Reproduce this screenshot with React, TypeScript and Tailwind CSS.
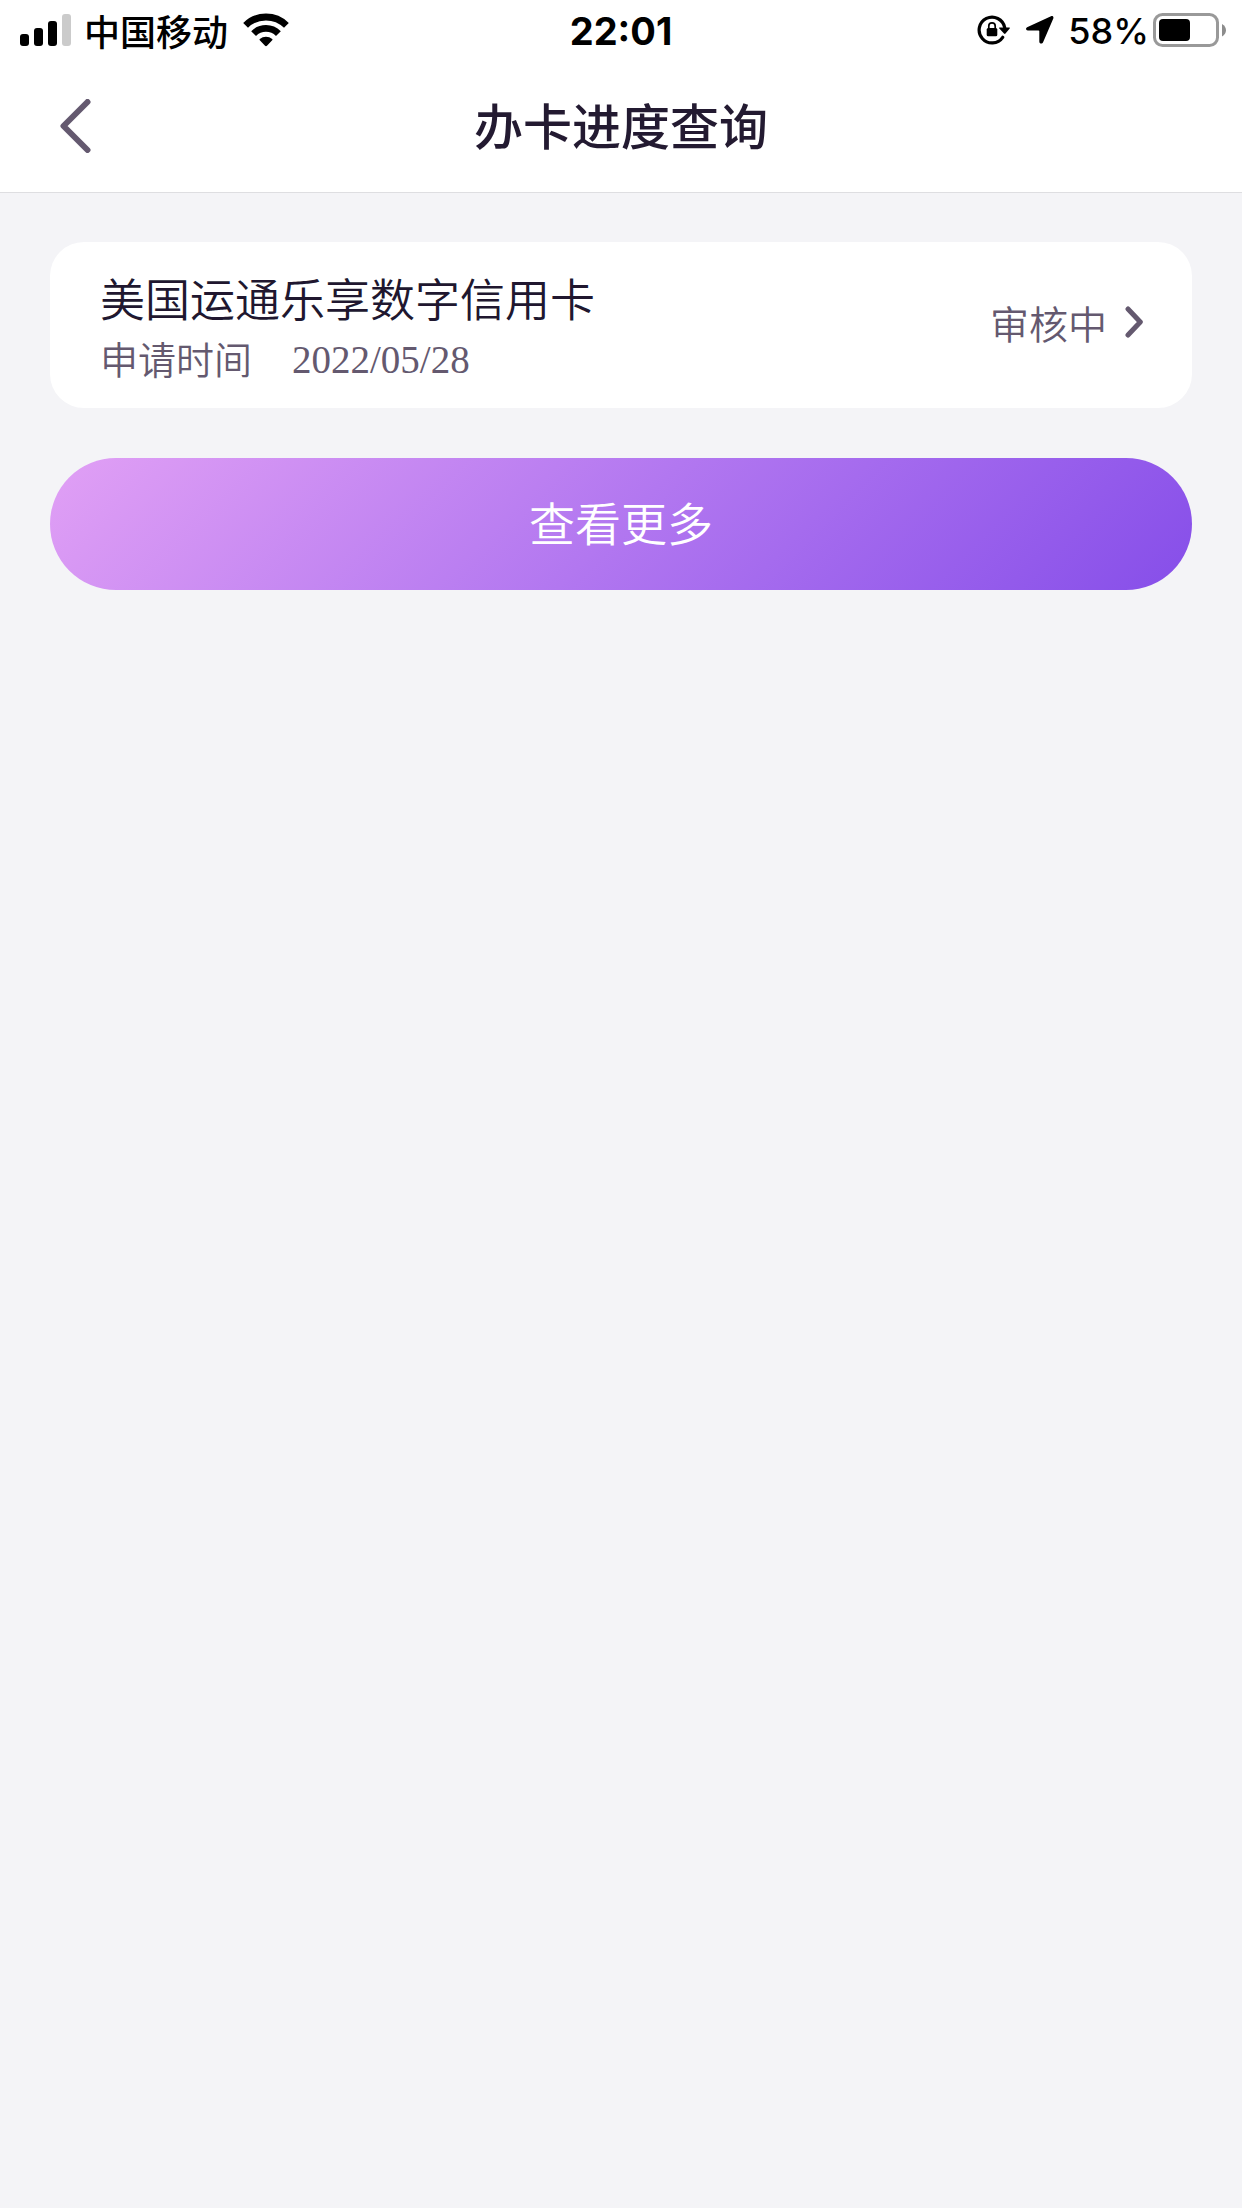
interface Application {
  id: string;
  name: string;
  date: string;
  status: string;
}

const APPLICATIONS: Application[] = [
  { id: "amex", name: "美国运通乐享数字信用卡", date: "2022/05/28", status: "审核中" },
];

function SignalIcon() {
  return (
    <svg width="52" height="32" viewBox="0 0 52 32" aria-hidden="true">
      <rect x="0" y="20" width="9" height="12" rx="3" />
      <rect x="14" y="14" width="9" height="18" rx="3" />
      <rect x="28" y="7" width="9" height="25" rx="3" />
      <rect x="42" y="0" width="9" height="32" rx="3" fill="#cbcbcb" />
    </svg>
  );
}

function WifiIcon() {
  return (
    <svg width="46" height="34" viewBox="0 0 46 34" aria-hidden="true">
      <g fill="none" stroke="#000" strokeWidth="6.8">
        <path d="M2.6 12.4A29 29 0 0 1 43.4 12.4" />
        <path d="M10.6 20.6A17.5 17.5 0 0 1 35.4 20.6" />
      </g>
      <path d="M16.8 26a9.6 9.6 0 0 1 12.4 0c.5.4.5.9 0 1.3l-5 5.3c-.8.8-1.6.8-2.4 0l-5-5.3c-.5-.4-.5-.9 0-1.3z" />
    </svg>
  );
}

function RotationLockIcon() {
  return (
    <svg width="33" height="30" viewBox="0 0 33 30" aria-hidden="true">
      <path d="M25.7 22.3A12.9 12.9 0 1 1 27.7 12.5" fill="none" stroke="#000" strokeWidth="3.2" strokeLinecap="round" />
      <path d="M22.8 12.5h9.4c.6 0 .8.5.5 1l-4.2 5.1c-.5.6-1 .6-1.5 0l-4.7-5.1c-.4-.5-.1-1 .5-1z" />
      <rect x="9.7" y="13" width="10.6" height="8.3" rx="1.5" />
      <path d="M11.8 14v-3a3.2 3.2 0 0 1 6.4 0v3" fill="none" stroke="#000" strokeWidth="1.7" />
    </svg>
  );
}

function LocationIcon() {
  return (
    <svg width="28" height="28" viewBox="0 0 28 28" aria-hidden="true">
      <path d="M1.1 11.2 25 .3c1.7-.7 2.9.5 2.3 2.2L17.2 26c-.9 2.3-3.9 2-3.9-.5V15.300c0-.5-.3-.8-.8-.8H1.800C-.2 14.500-.6 12 1.100 11.200z" />
    </svg>
  );
}

function BatteryIcon() {
  return (
    <svg width="73" height="34" viewBox="0 0 73 34" aria-hidden="true">
      <rect x="1.5" y="1.5" width="63" height="31" rx="8" fill="none" stroke="#999" strokeWidth="3" />
      <rect x="6" y="6" width="31" height="22" rx="4" />
      <path d="M69 11c5.3 2.5 5.3 10 0 12.5z" fill="#8c8c8c" />
    </svg>
  );
}

function StatusBar() {
  return (
    <div className="grid h-[60px] grid-cols-[1fr_auto_1fr] items-center px-4 font-['Inter','Noto_Sans_CJK_SC',sans-serif] text-[36px] leading-[56px] text-black">
      <div className="flex items-center gap-3 pl-1">
        <SignalIcon />
        <span className="pr-[3px] font-['Noto_Sans_CJK_SC',sans-serif] font-medium">中国移动</span>
        <WifiIcon />
      </div>
      <time className="pt-[2px] text-[38px] font-bold">22:01</time>
      <div className="flex items-center justify-end">
        <RotationLockIcon />
        <span className="ml-4 mr-3.5">
          <LocationIcon />
        </span>
        <span className="mr-1 pt-[2px] font-medium">58%</span>
        <BatteryIcon />
      </div>
    </div>
  );
}

function NavBar() {
  return (
    <div className="grid h-[132px] grid-cols-[1fr_auto_1fr] items-center px-[60px]">
      <button type="button" aria-label="返回" className="w-[31px] cursor-pointer text-[#64596f]">
        <svg width="31" height="54" viewBox="0 0 31 54" fill="none" stroke="currentColor" strokeWidth="6" strokeLinecap="round" strokeLinejoin="round">
          <path d="M27.5 3 3.5 27l24 24" />
        </svg>
      </button>
      <h1 className="pb-1 text-[49px] font-medium leading-[72px] text-[#231a31]">办卡进度查询</h1>
    </div>
  );
}

function ApplicationCard({ item }: { item: Application }) {
  return (
    <a href={`#${item.id}`} className="flex items-center justify-between rounded-[34px] bg-white pb-[20px] pl-[50px] pr-[49px] pt-[26px]">
      <div>
        <h2 className="text-[45px] font-[350] leading-[60px] text-[#20172f]">{item.name}</h2>
        <p className="flex items-end gap-10 text-[38px] font-[350] leading-[60px] text-[#64596f]">
          <span>申请时间</span>
          <time className="font-['Liberation_Serif',serif] text-[39px] leading-[56px]">{item.date}</time>
        </p>
      </div>
      <div className="flex items-center gap-[18px] pb-3 text-[39px] font-[350] leading-[58px] text-[#64596f]">
        <span>{item.status}</span>
        <svg width="18" height="32" viewBox="0 0 18 32" fill="none" stroke="currentColor" strokeWidth="5" strokeLinecap="round" strokeLinejoin="round" aria-hidden="true">
          <path d="M3 3 15.3 16 3 29" />
        </svg>
      </div>
    </a>
  );
}

export default function App() {
  return (
    <div className="min-h-screen bg-[#f4f4f7] font-['Noto_Sans_CJK_SC',sans-serif]">
      <header className="border-b border-[#dedee1] bg-white">
        <StatusBar />
        <NavBar />
      </header>
      <main className="flex flex-col gap-[50px] px-[50px] py-[49px]">
        {APPLICATIONS.map(item => <ApplicationCard key={item.id} item={item} />)}
        <button type="button" className="h-[132px] w-full cursor-pointer rounded-full bg-[linear-gradient(135deg,#e1a0f5_0%,#b277f0_50%,#864ee9_100%)] pb-[6px] text-[46px] font-[350] text-white">
          查看更多
        </button>
      </main>
    </div>
  );
}
